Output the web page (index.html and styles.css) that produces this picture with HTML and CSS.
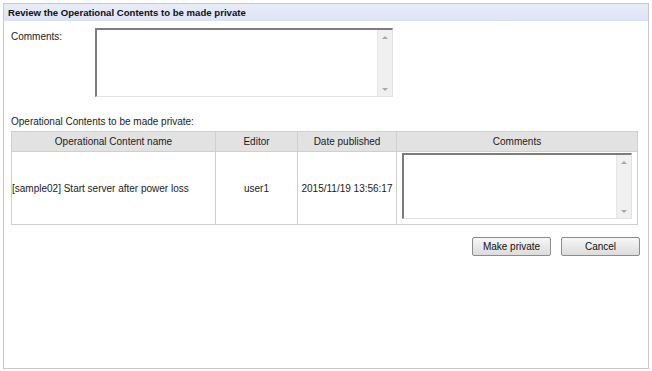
FILE: index.html
```html
<!DOCTYPE html>
<html>
<head>
<meta charset="utf-8">
<link rel="stylesheet" href="styles.css">
</head>
<body>
<div class="panel">
  <div class="panel-head">Review the Operational Contents to be made private</div>
  <div class="panel-body">
    <div class="comment-row">
      <div class="comment-label">Comments:</div>
      <div class="textbox textbox-main">
        <div class="textbox-area"></div>
        <div class="scroll"><span class="arrow up"></span><span class="arrow down"></span></div>
      </div>
    </div>
    <div class="list-label">Operational Contents to be made private:</div>
    <table class="grid">
      <thead>
        <tr>
          <th class="c-name">Operational Content name</th>
          <th class="c-editor">Editor</th>
          <th class="c-date">Date published</th>
          <th class="c-comm">Comments</th>
        </tr>
      </thead>
      <tbody>
        <tr>
          <td class="left">[sample02] Start server after power loss</td>
          <td>user1</td>
          <td>2015/11/19 13:56:17</td>
          <td class="cell-box">
            <div class="textbox textbox-cell">
              <div class="textbox-area"></div>
              <div class="scroll"><span class="arrow up"></span><span class="arrow down"></span></div>
            </div>
          </td>
        </tr>
      </tbody>
    </table>
    <div class="actions">
      <button class="btn">Make private</button>
      <button class="btn">Cancel</button>
    </div>
  </div>
</div>
</body>
</html>
```
FILE: styles.css
```css
html, body {
  margin: 0;
  padding: 0;
  background: #ffffff;
}
body {
  font-family: "Liberation Sans", Arial, sans-serif;
  font-size: 10px;
  color: #1a1a1a;
}
.panel {
  margin: 3px;
  width: 644px;
  height: 364px;
  border: 1px solid #c8c8c8;
  box-sizing: content-box;
  display: flex;
  flex-direction: column;
}
.panel-head {
  height: 17px;
  line-height: 17px;
  padding-left: 4px;
  font-weight: bold;
  color: #111;
  background: linear-gradient(#e9edf8, #dbe2f5);
  font-size: 9.6px;
}
.panel-body {
  padding: 7px 7px 0 7px;
  display: flex;
  flex-direction: column;
}
.comment-row {
  display: flex;
  align-items: flex-start;
}
.comment-label {
  width: 84px;
  padding-top: 3px;
}
.textbox {
  display: flex;
  box-sizing: border-box;
  border-top: 2px solid #7c7c7c;
  border-left: 2px solid #7c7c7c;
  border-right: 1px solid #e2e2e2;
  border-bottom: 1px solid #e2e2e2;
  background: #fff;
}
.textbox-main {
  width: 298px;
  height: 69px;
}
.textbox-cell {
  width: 230px;
  height: 66px;
}
.textbox-area {
  flex: 1;
}
.scroll {
  width: 14px;
  background: #f0f0f0;
  border-left: 1px solid #e6e6e6;
  display: flex;
  flex-direction: column;
  justify-content: space-between;
  align-items: center;
  padding: 6px 0 5px;
}
.arrow {
  width: 0;
  height: 0;
  border-left: 3px solid transparent;
  border-right: 3px solid transparent;
}
.arrow.up {
  border-bottom: 3px solid #a8a8a8;
}
.arrow.down {
  border-top: 3px solid #a8a8a8;
}
.list-label {
  margin-top: 18px;
  height: 14px;
  line-height: 14px;
}
.grid {
  margin-top: 2px;
  width: 627px;
  border-collapse: collapse;
  table-layout: fixed;
}
.grid th, .grid td {
  border: 1px solid #cfcfcf;
  text-align: center;
  font-weight: normal;
  padding: 0;
}
.grid th {
  height: 19px;
  background: #e2e2e2;
}
.grid td {
  height: 69px;
}
.grid td.left {
  text-align: left;
}
.c-name { width: 203px; }
.c-editor { width: 81px; }
.c-date { width: 98px; }
.grid td.cell-box {
  padding: 1px 4px 2px 5px;
  vertical-align: top;
}
.actions {
  display: flex;
  justify-content: flex-end;
  gap: 10px;
  margin-top: 12px;
  margin-right: 1px;
}
.btn {
  width: 79px;
  height: 19px;
  padding: 0;
  font-family: "Liberation Sans", Arial, sans-serif;
  font-size: 10px;
  color: #111;
  border: 1px solid #8c8c8c;
  border-radius: 2px;
  background: linear-gradient(#f6f6f6, #dcdcdc);
}
```
